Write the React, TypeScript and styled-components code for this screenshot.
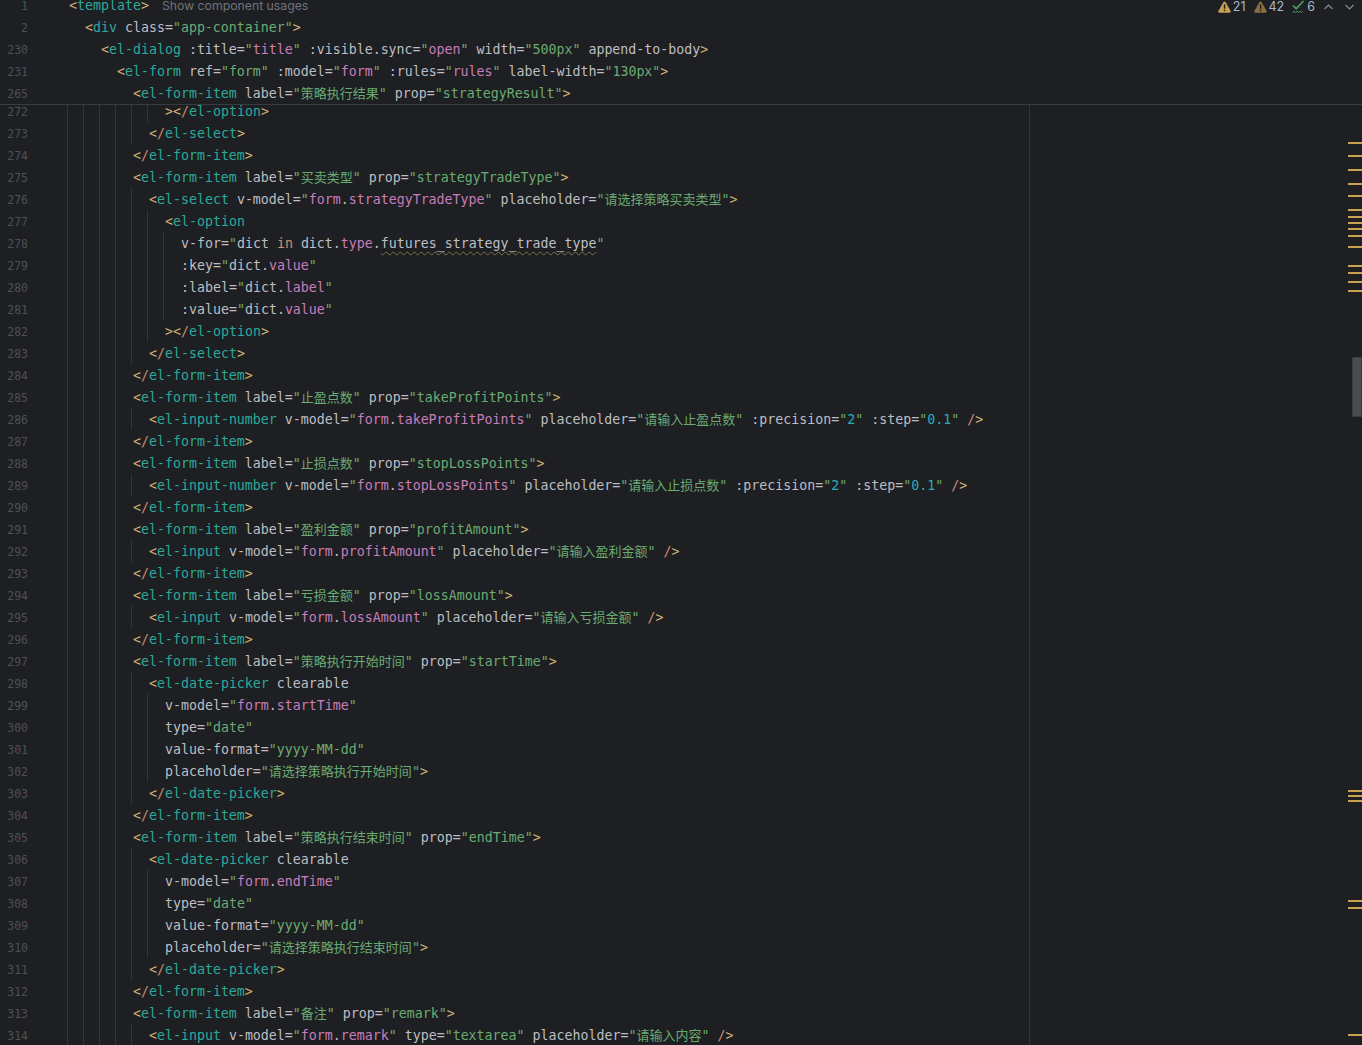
import React from "react";
import styled, { createGlobalStyle } from "styled-components";

type Kind = "bracket" | "slash" | "tag" | "attr" | "string" | "number" | "prop" | "plain" | "keyword" | "typo";

const colors: Record<Kind, string> = {
  bracket: "#d5b778",
  slash: "#cf8e6d",
  tag: "#2aa99b",
  attr: "#bcbec4",
  string: "#6aab73",
  number: "#2aacb8",
  prop: "#c77dbb",
  plain: "#bcbec4",
  keyword: "#cf8e6d",
  typo: "#bcbec4",
};

const stickyLines: [number, string][] = [
  [1, "<template>"],
  [2, '  <div class="app-container">'],
  [230, '    <el-dialog :title="title" :visible.sync="open" width="500px" append-to-body>'],
  [231, '      <el-form ref="form" :model="form" :rules="rules" label-width="130px">'],
  [265, '        <el-form-item label="策略执行结果" prop="strategyResult">'],
];

const bodyLines: string[] = [
  "            ></el-option>",
  "          </el-select>",
  "        </el-form-item>",
  '        <el-form-item label="买卖类型" prop="strategyTradeType">',
  '          <el-select v-model="form.strategyTradeType" placeholder="请选择策略买卖类型">',
  "            <el-option",
  '              v-for="dict in dict.type.futures_strategy_trade_type"',
  '              :key="dict.value"',
  '              :label="dict.label"',
  '              :value="dict.value"',
  "            ></el-option>",
  "          </el-select>",
  "        </el-form-item>",
  '        <el-form-item label="止盈点数" prop="takeProfitPoints">',
  '          <el-input-number v-model="form.takeProfitPoints" placeholder="请输入止盈点数" :precision="2" :step="0.1" />',
  "        </el-form-item>",
  '        <el-form-item label="止损点数" prop="stopLossPoints">',
  '          <el-input-number v-model="form.stopLossPoints" placeholder="请输入止损点数" :precision="2" :step="0.1" />',
  "        </el-form-item>",
  '        <el-form-item label="盈利金额" prop="profitAmount">',
  '          <el-input v-model="form.profitAmount" placeholder="请输入盈利金额" />',
  "        </el-form-item>",
  '        <el-form-item label="亏损金额" prop="lossAmount">',
  '          <el-input v-model="form.lossAmount" placeholder="请输入亏损金额" />',
  "        </el-form-item>",
  '        <el-form-item label="策略执行开始时间" prop="startTime">',
  "          <el-date-picker clearable",
  '            v-model="form.startTime"',
  '            type="date"',
  '            value-format="yyyy-MM-dd"',
  '            placeholder="请选择策略执行开始时间">',
  "          </el-date-picker>",
  "        </el-form-item>",
  '        <el-form-item label="策略执行结束时间" prop="endTime">',
  "          <el-date-picker clearable",
  '            v-model="form.endTime"',
  '            type="date"',
  '            value-format="yyyy-MM-dd"',
  '            placeholder="请选择策略执行结束时间">',
  "          </el-date-picker>",
  "        </el-form-item>",
  '        <el-form-item label="备注" prop="remark">',
  '          <el-input v-model="form.remark" type="textarea" placeholder="请输入内容" />',
];

const markerTops = [
  142, 155, 169, 183, 195, 209, 216, 222, 228, 235, 246, 265, 272, 281, 290, 790, 795, 800, 900, 907, 1034,
];

type Piece = { kind: Kind; text: string };

// splits the inside of a bound attribute, e.g. form.startTime
const expression = (value: string): Piece[] => {
  if (/^[\d.]+$/.test(value)) return [{ kind: "number", text: value }];
  return value
    .split(/(\.|\s+)/)
    .filter(Boolean)
    .map((text): Piece => {
      if (text === "." || !text.trim()) return { kind: "plain", text };
      if (text === "dict") return { kind: "plain", text };
      if (text === "in") return { kind: "keyword", text };
      if (text === "futures_strategy_trade_type") return { kind: "typo", text };
      return { kind: "prop", text };
    });
};

const tokenize = (source: string): Piece[] => {
  const pieces: Piece[] = [];
  const pattern = /<\/|\/>|<|>|"[^"]*"|=|\s+|[^\s<>="/]+/g;
  let lastWord = "";
  let afterOpen = false;
  for (const match of source.matchAll(pattern)) {
    const text = match[0];
    if (text === "<" || text === ">") {
      pieces.push({ kind: "bracket", text });
      afterOpen = text === "<";
    } else if (text === "</") {
      pieces.push({ kind: "bracket", text: "<" }, { kind: "slash", text: "/" });
      afterOpen = true;
    } else if (text === "/>") {
      pieces.push({ kind: "slash", text: "/" }, { kind: "bracket", text: ">" });
    } else if (text === "=") {
      pieces.push({ kind: "plain", text });
    } else if (text.startsWith('"')) {
      const inner = text.slice(1, -1);
      const bound = lastWord.startsWith(":") || lastWord.startsWith("v-");
      pieces.push({ kind: "string", text: '"' });
      if (bound) pieces.push(...expression(inner));
      else pieces.push({ kind: "string", text: inner });
      pieces.push({ kind: "string", text: '"' });
    } else if (!text.trim()) {
      pieces.push({ kind: "plain", text });
    } else {
      pieces.push({ kind: afterOpen ? "tag" : "attr", text });
      afterOpen = false;
      lastWord = text;
    }
  }
  return pieces;
};

const CodeLine: React.FC<{ number: number; source: string; guides: boolean }> = ({ number, source, guides }) => {
  const level = Math.floor((source.length - source.trimStart().length) / 2);
  return (
    <Row>
      <LineNumber>{number}</LineNumber>
      <Gap />
      {Array.from({ length: level }, (_, i) => (
        <Indent key={i} $guide={guides} />
      ))}
      <Code>
        {tokenize(source.trimStart()).map((piece, i) => (
          <Token key={i} $kind={piece.kind}>
            {/[\u4e00-\u9fff]/.test(piece.text) ? <Cjk>{piece.text}</Cjk> : piece.text}
          </Token>
        ))}
      </Code>
      {number === 1 && <InlayHint>Show component usages</InlayHint>}
    </Row>
  );
};

const WarningIcon: React.FC<{ color: string }> = ({ color }) => (
  <svg width="13" height="12" viewBox="0 0 13 12">
    <path d="M6.5 0.5c.5 0 .9.3 1.2.8l4.9 8.6c.5.9-.1 1.8-1.1 1.8H1.5c-1 0-1.6-.9-1.1-1.8l4.9-8.6c.3-.5.7-.8 1.2-.8z" fill={color} />
    <rect x="5.8" y="3.4" width="1.5" height="4.4" fill="#1e1f22" />
    <rect x="5.8" y="8.7" width="1.5" height="1.5" fill="#1e1f22" />
  </svg>
);

const CheckIcon: React.FC = () => (
  <svg width="13" height="14" viewBox="0 0 13 14" fill="none">
    <path d="M1 5.5l3.2 3.2L11.5 1" stroke="#4f9a5e" strokeWidth="1.7" />
    <path d="M.5 12.5l1.5-1.2 1.5 1.2 1.5-1.2 1.5 1.2 1.5-1.2 1.5 1.2 1.5-1.2" stroke="#4f9a5e" strokeWidth="1" />
  </svg>
);

const Chevron: React.FC<{ up?: boolean }> = ({ up }) => (
  <svg width="9" height="6" viewBox="0 0 9 6" fill="none">
    <path d={up ? "M.5 5L4.5 1l4 4" : "M.5 1l4 4 4-4"} stroke="#868a91" strokeWidth="1.2" />
  </svg>
);

const App: React.FC = () => {
  return (
    <Editor>
      <GlobalStyle />
      <StickyHeader>
        {stickyLines.map(([number, source]) => (
          <CodeLine key={number} number={number} source={source} guides={false} />
        ))}
        <Inspections>
          <Problem>
            <WarningIcon color="#c8a24f" />
            <Count>21</Count>
          </Problem>
          <Problem>
            <WarningIcon color="#8a7040" />
            <Count>42</Count>
          </Problem>
          <Problem>
            <CheckIcon />
            <Count>6</Count>
          </Problem>
          <Chevrons>
            <Chevron up />
            <Chevron />
          </Chevrons>
        </Inspections>
      </StickyHeader>
      <Body>
        <Lines>
          {bodyLines.map((source, i) => (
            <CodeLine key={i} number={272 + i} source={source} guides />
          ))}
        </Lines>
        <RightMargin />
      </Body>
      <Stripe>
        {markerTops.map((top) => (
          <Marker key={top} style={{ top }} />
        ))}
        <Thumb />
      </Stripe>
    </Editor>
  );
};

const GlobalStyle = createGlobalStyle`
  html, body {
    margin: 0;
    padding: 0;
    background: #1e1f22;
    overflow: hidden;
  }
`;

const Editor = styled.div`
  position: relative;
  display: flex;
  flex-direction: column;
  width: 1362px;
  height: 1045px;
  overflow: hidden;
  background: #1e1f22;
  font-family: "DejaVu Sans Mono", "Noto Sans CJK SC", monospace;
  font-size: 13.28px;
`;

const StickyHeader = styled.div`
  position: relative;
  flex: none;
  margin-top: -6px;
  border-bottom: 1px solid #393b40;
`;

const Row = styled.div`
  display: flex;
  align-items: stretch;
  height: 22px;
  line-height: 24px;
  white-space: pre;
`;

const LineNumber = styled.div`
  flex: none;
  width: 28px;
  text-align: right;
  color: #4b5059;
  font-size: 11.5px;
`;

const Gap = styled.div`
  flex: none;
  width: 39px;
`;

const Indent = styled.div<{ $guide: boolean }>`
  flex: none;
  width: 16px;
  box-sizing: border-box;
  border-left: 1px solid ${(p) => (p.$guide ? "#313438" : "transparent")};
`;

const Code = styled.div`
  flex: none;
  padding-left: 2px;
`;

const Token = styled.span<{ $kind: Kind }>`
  color: ${(p) => colors[p.$kind]};
  ${(p) =>
    p.$kind === "typo" &&
    `
    text-decoration: underline wavy #7d7245 1px;
    text-underline-offset: 3px;
  `}
`;

const Cjk = styled.span`
  font-size: 13px;
`;

const InlayHint = styled.div`
  margin-left: 13px;
  font-family: "Inter", sans-serif;
  font-size: 12.26px;
  color: #6f737a;
`;

const Inspections = styled.div`
  position: absolute;
  top: 6px;
  right: 8px;
  display: flex;
  align-items: center;
  height: 14px;
  gap: 8px;
  font-family: "Inter", sans-serif;
`;

const Problem = styled.div`
  display: flex;
  align-items: center;
  gap: 2px;
`;

const Count = styled.span`
  font-size: 12.5px;
  line-height: 14px;
  color: #a5b6c9;
`;

const Chevrons = styled.div`
  display: flex;
  align-items: center;
  gap: 12px;
  margin-left: 1px;
`;

const Body = styled.div`
  position: relative;
  flex: 1;
  overflow: hidden;
`;

const Lines = styled.div`
  margin-top: -5px;
`;

const RightMargin = styled.div`
  position: absolute;
  top: 0;
  bottom: 0;
  left: 1029px;
  width: 1px;
  background: #313438;
`;

const Stripe = styled.div`
  position: absolute;
  top: 0;
  right: 0;
  bottom: 0;
  width: 14px;
`;

const Marker = styled.div`
  position: absolute;
  left: 0;
  right: 0;
  height: 2px;
  background: #c8a24f;
`;

const Thumb = styled.div`
  position: absolute;
  top: 357px;
  left: 4px;
  width: 10px;
  height: 60px;
  box-sizing: border-box;
  background: #4a4b4e;
  border: 1px solid #393a3d;
`;

export default App;
